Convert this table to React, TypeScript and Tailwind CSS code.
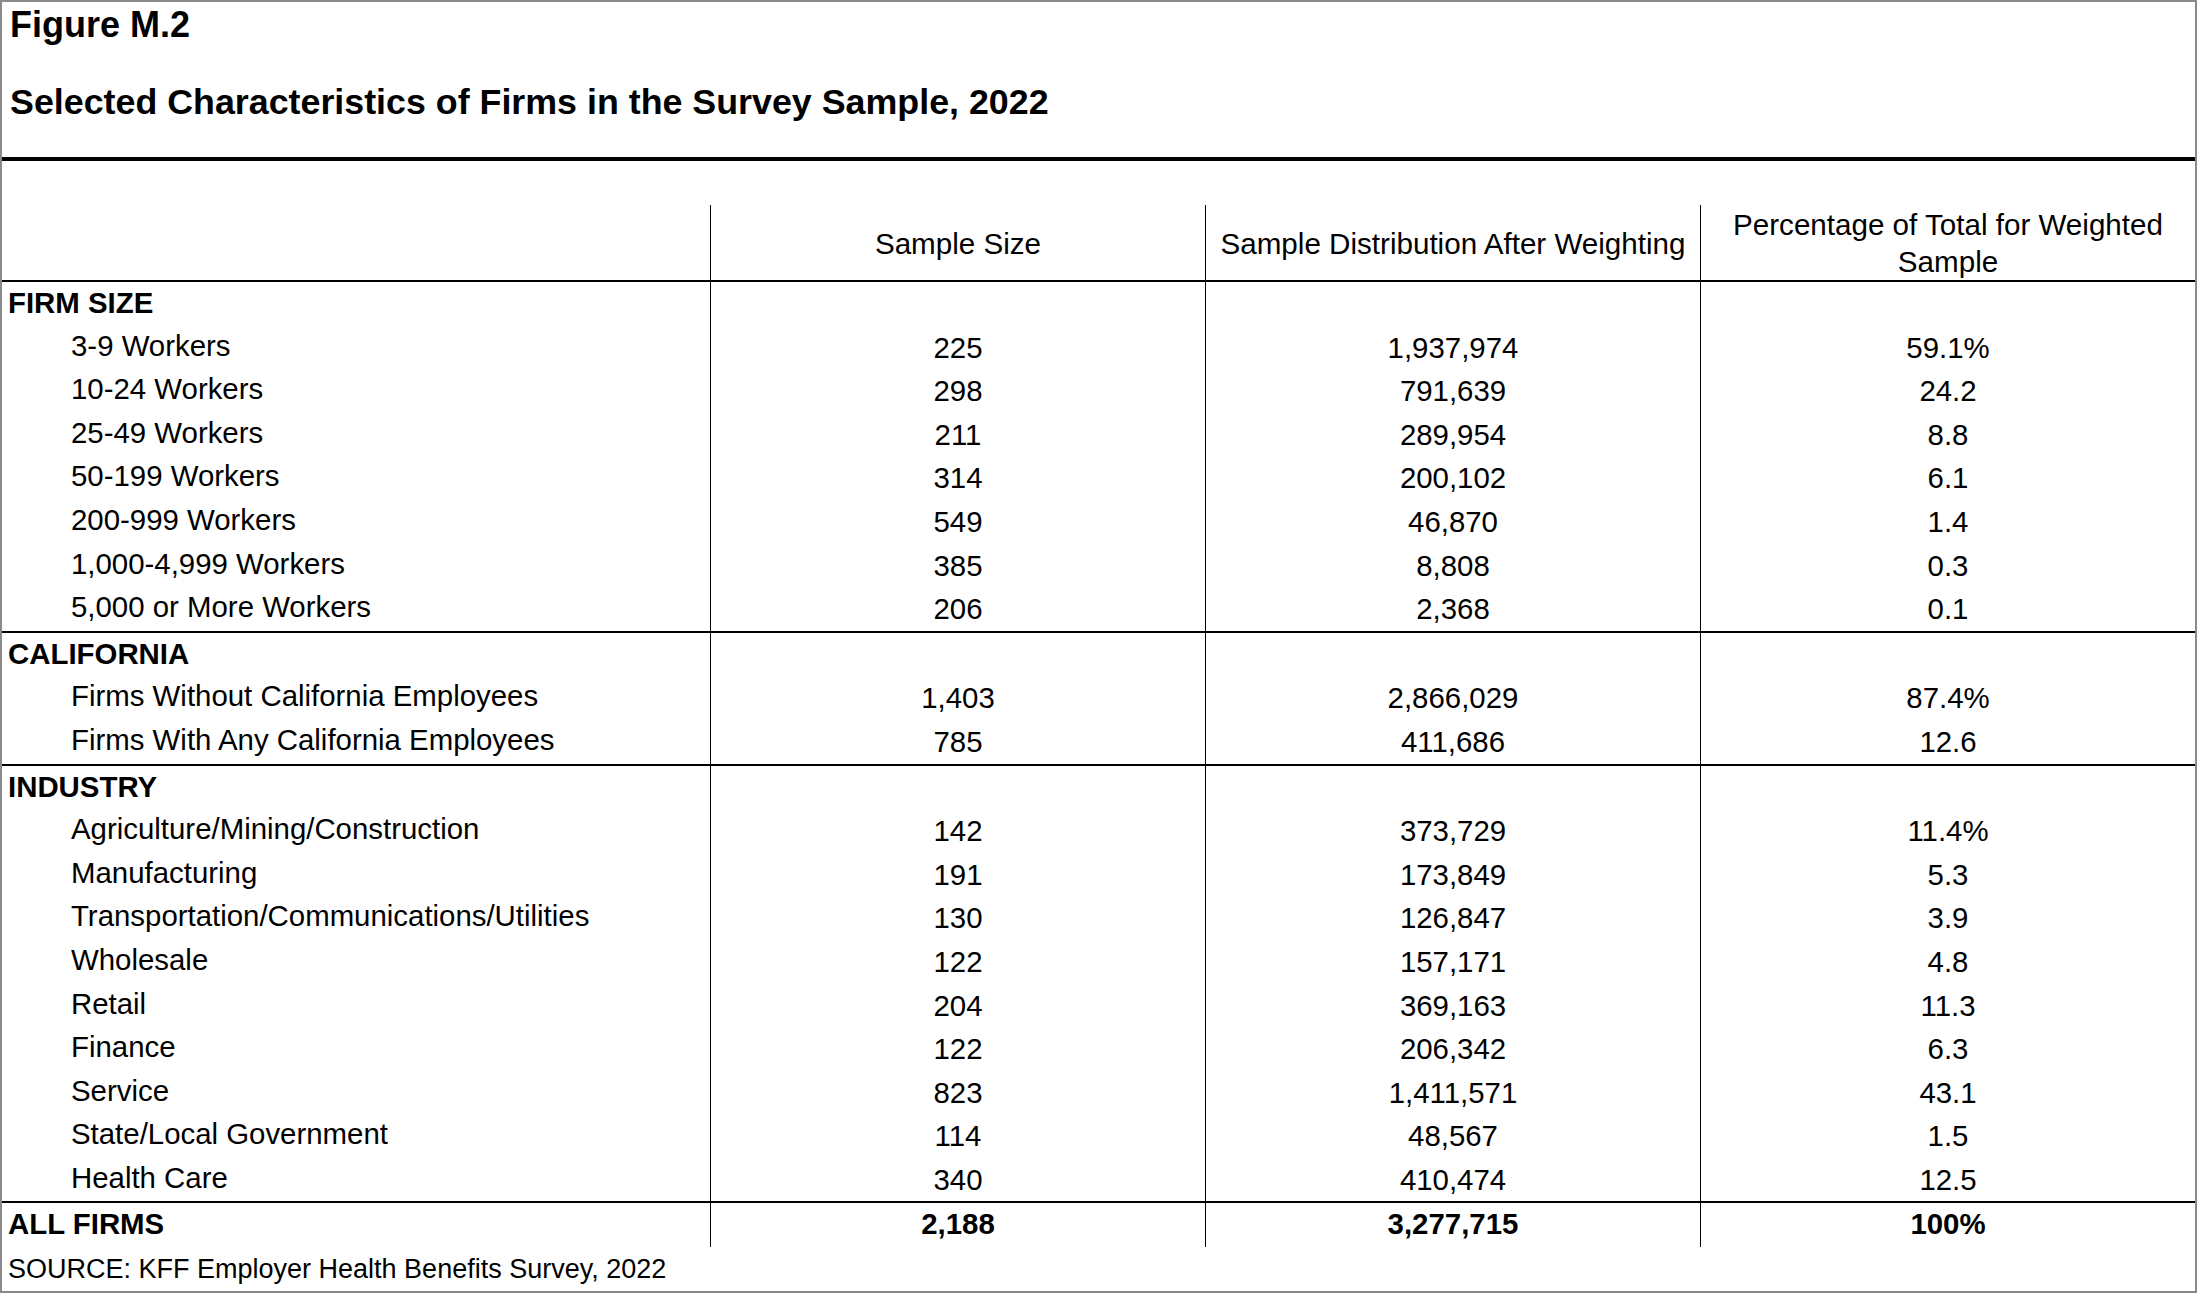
import React from 'react'

type Row = [string, string, string, string]

const groups: { title: string; rows: Row[] }[] = [
  {
    title: 'FIRM SIZE',
    rows: [
      ['3-9 Workers', '225', '1,937,974', '59.1%'],
      ['10-24 Workers', '298', '791,639', '24.2'],
      ['25-49 Workers', '211', '289,954', '8.8'],
      ['50-199 Workers', '314', '200,102', '6.1'],
      ['200-999 Workers', '549', '46,870', '1.4'],
      ['1,000-4,999 Workers', '385', '8,808', '0.3'],
      ['5,000 or More Workers', '206', '2,368', '0.1'],
    ],
  },
  {
    title: 'CALIFORNIA',
    rows: [
      ['Firms Without California Employees', '1,403', '2,866,029', '87.4%'],
      ['Firms With Any California Employees', '785', '411,686', '12.6'],
    ],
  },
  {
    title: 'INDUSTRY',
    rows: [
      ['Agriculture/Mining/Construction', '142', '373,729', '11.4%'],
      ['Manufacturing', '191', '173,849', '5.3'],
      ['Transportation/Communications/Utilities', '130', '126,847', '3.9'],
      ['Wholesale', '122', '157,171', '4.8'],
      ['Retail', '204', '369,163', '11.3'],
      ['Finance', '122', '206,342', '6.3'],
      ['Service', '823', '1,411,571', '43.1'],
      ['State/Local Government', '114', '48,567', '1.5'],
      ['Health Care', '340', '410,474', '12.5'],
    ],
  },
]

const grid = 'grid grid-cols-[708px_495px_495px_495px]'

function DataRow({ row, heading = false }: { row: Row; heading?: boolean }) {
  const [label, a, b, c] = row
  return (
    <div className={`${grid} h-[43.6px]`}>
      <div className={`leading-[29px] ${heading ? 'pl-[6px] pt-[6px] font-bold' : 'pl-[69px] pt-[5px]'}`}>{label}</div>
      <div className="border-l border-black text-center leading-[29px] pt-[7px]">{a}</div>
      <div className="border-l border-black text-center leading-[29px] pt-[7px]">{b}</div>
      <div className="border-l border-black text-center leading-[29px] pt-[7px]">{c}</div>
    </div>
  )
}

export default function App() {
  return (
    <div
      className="w-[2197px] h-[1293px] border-2 border-[#8a8a8a] bg-white text-black flex flex-col overflow-hidden"
      style={{ fontFamily: '"Liberation Sans", Arial, sans-serif' }}
    >
      {/* title block */}
      <div className="h-[155px] pl-[8px] pt-[5px]">
        <div className="text-[36px] leading-[36px] font-bold">Figure M.2</div>
        <div className="text-[35.8px] leading-[36px] font-bold mt-[41px]">
          Selected Characteristics of Firms in the Survey Sample, 2022
        </div>
      </div>
      <div className="h-[4px] bg-black" />

      {/* column headings */}
      <div className="h-[44px]" />
      <div className={`${grid} h-[77px] text-[29.6px] leading-[37px] border-b-2 border-black`}>
        <div />
        <div className="border-l border-black flex items-center justify-center text-center pt-[2px]">Sample Size</div>
        <div className="border-l border-black flex items-center justify-center text-center pt-[2px]">
          Sample Distribution After Weighting
        </div>
        <div className="border-l border-black flex items-center justify-center text-center px-[10px]">
          Percentage of Total for Weighted Sample
        </div>
      </div>

      {/* body */}
      <div className="text-[29.4px]">
        {groups.map((g, gi) => (
          <div key={g.title} className={gi > 0 ? 'border-t-2 border-black' : ''}>
            <DataRow row={[g.title, '', '', '']} heading />
            {g.rows.map((r) => (
              <DataRow key={r[0]} row={r} />
            ))}
          </div>
        ))}
        <div className="border-t-2 border-black">
          <div className={`${grid} h-[43.6px] font-bold`}>
            <div className="leading-[29px] pl-[6px] pt-[6px]">ALL FIRMS</div>
            <div className="border-l border-black text-center leading-[29px] pt-[6px]">2,188</div>
            <div className="border-l border-black text-center leading-[29px] pt-[6px]">3,277,715</div>
            <div className="border-l border-black text-center leading-[29px] pt-[6px]">100%</div>
          </div>
        </div>
      </div>

      <div className="text-[27px] leading-[27px] pl-[6px] pt-[9px]">SOURCE: KFF Employer Health Benefits Survey, 2022</div>
    </div>
  )
}
